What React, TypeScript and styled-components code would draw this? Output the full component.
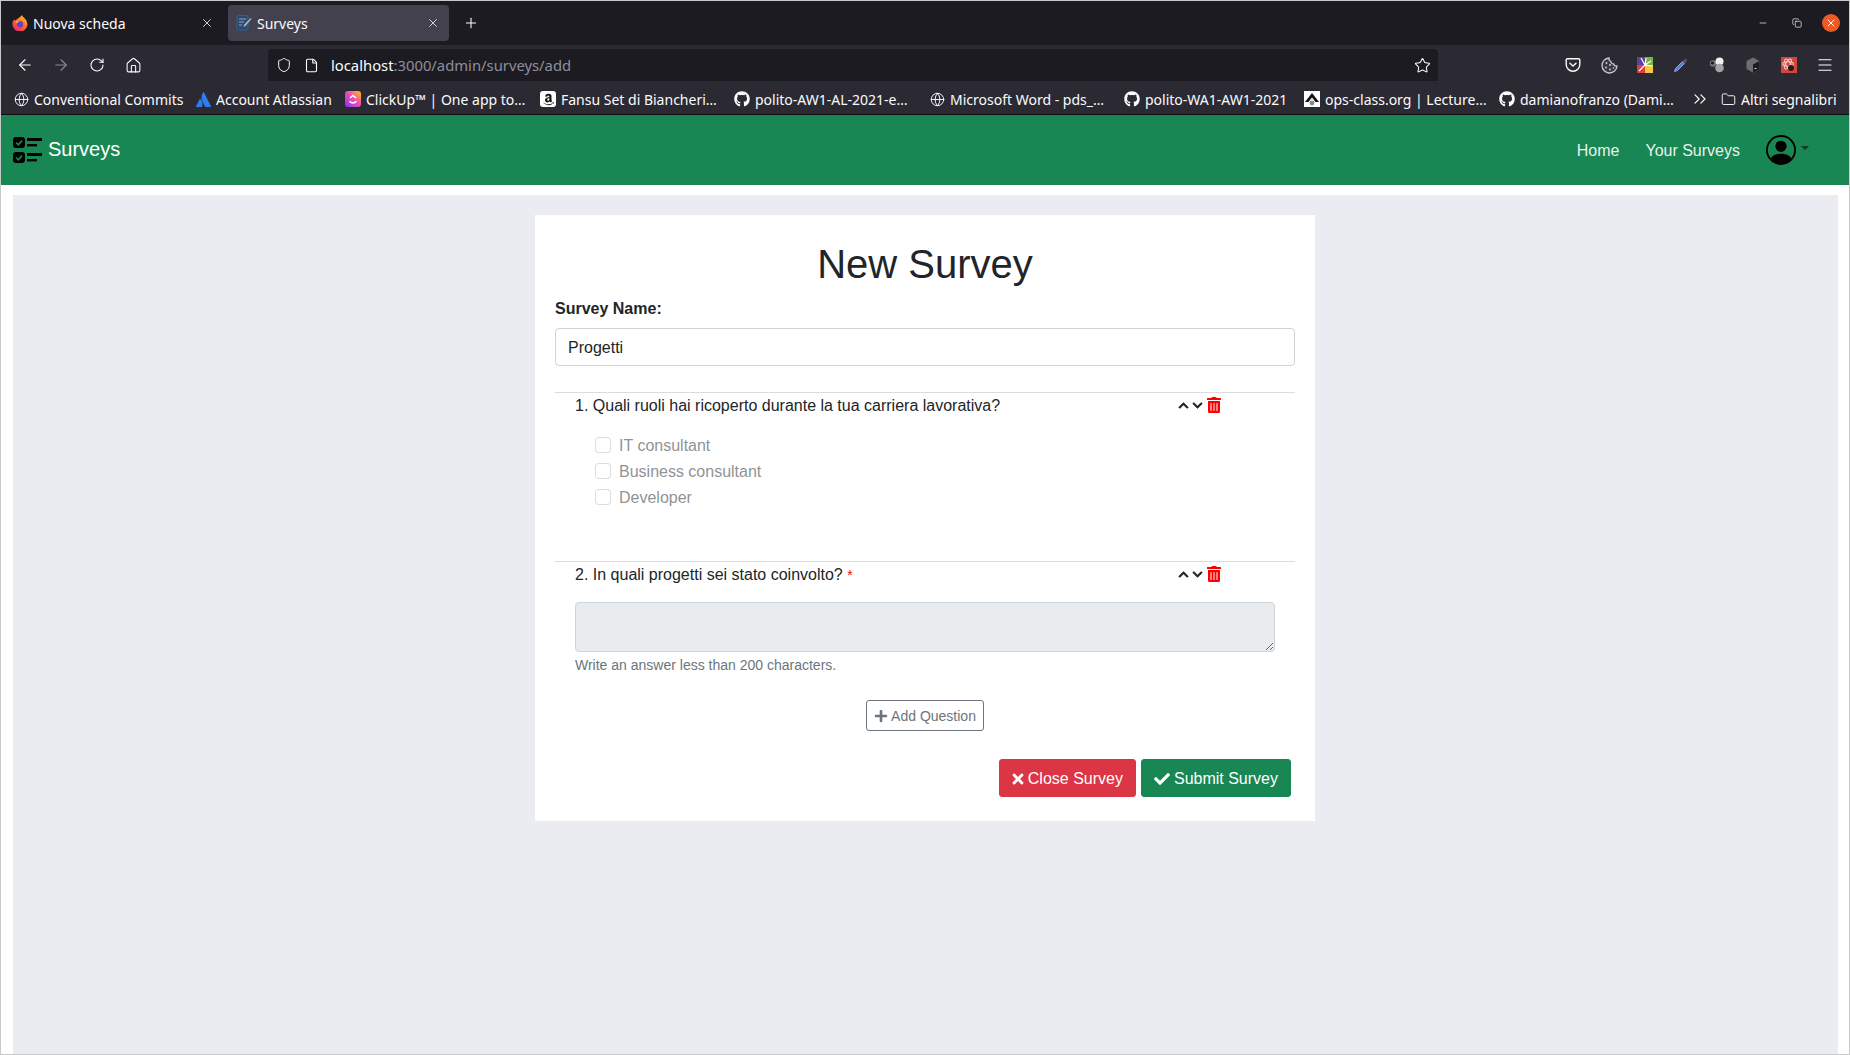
import React from 'react';
import styled, { createGlobalStyle } from 'styled-components';
import { ArrowLeft, ArrowRight, RotateCw, Home, Shield, File, Star, Globe, ChevronsRight, Folder, Menu, X, Plus, Minus, Copy } from 'lucide-react';
import { FaChevronUp, FaChevronDown, FaTrashAlt, FaTimes, FaCheck, FaPlus, FaGithub, FaAmazon } from 'react-icons/fa';
import { BsPersonCircle } from 'react-icons/bs';
import { SiAtlassian } from 'react-icons/si';

const GlobalStyle = createGlobalStyle`
  html, body { margin: 0; padding: 0; height: 100%; }
  body { background: #fff; font-family: "Liberation Sans", Arial, sans-serif; font-size: 16px; color: #212529; }
  * { box-sizing: border-box; }
`;

const FirefoxIcon = () => (
  <svg width="16" height="16" viewBox="0 0 16 16">
    <defs>
      <linearGradient id="ff" x1="0.8" y1="0" x2="0.2" y2="1">
        <stop offset="0" stopColor="#ffc42e" />
        <stop offset="0.5" stopColor="#ff6a2a" />
        <stop offset="1" stopColor="#e3236a" />
      </linearGradient>
    </defs>
    <path d="M10 0c.3 1.800 2 2.400 3.300 3.900A7.500 7.500 0 1 1 2.300 4.200C2.600 5 3 5.400 3.600 5.600 4.600 3.700 8 3 10 0z" fill="url(#ff)" />
    <circle cx="8" cy="9.300" r="3.200" fill="#6b3fc4" />
    <path d="M3.500 6.500c1.500-.8 3-.8 4.500 0-1.500 0-2.700.8-3 2.300z" fill="#ffb02e" />
  </svg>
);

const SurveyFavicon = () => (
  <svg width="16" height="16" viewBox="0 0 16 16">
    <rect x="1" y="0.5" width="11" height="14.5" rx="1.500" fill="#2c4a6e" stroke="#35608f" />
    <path d="M3 4h7M3 7h5M3 10h3" stroke="#8fa6bf" strokeWidth="1" />
    <path d="M14.500 3l1 1-6 7-2 1 .6-2.200z" fill="#aab4c0" />
  </svg>
);

const ClickUpIcon = () => (
  <svg width="16" height="16" viewBox="0 0 16 16">
    <defs>
      <linearGradient id="cu" x1="0" y1="1" x2="1" y2="0">
        <stop offset="0" stopColor="#8930fd" />
        <stop offset="0.55" stopColor="#f04fb0" />
        <stop offset="1" stopColor="#ffc800" />
      </linearGradient>
    </defs>
    <rect width="16" height="16" rx="3" fill="url(#cu)" />
    <path d="M5 7l3-2.500L11 7" fill="none" stroke="#fff" strokeWidth="1.600" />
    <path d="M4.500 10.200C6.500 12.400 9.500 12.400 11.500 10.200" fill="none" stroke="#fff" strokeWidth="1.600" />
  </svg>
);

const OpsIcon = () => (
  <svg width="16" height="16" viewBox="0 0 16 16">
    <rect width="16" height="16" fill="#fff" />
    <path d="M8 2L15 11h-3.400L8 6.500 4.400 11H1z" fill="#111" />
    <circle cx="8" cy="12" r="2.400" fill="#888" />
  </svg>
);

const PocketIcon = () => (
  <svg width="16" height="16" viewBox="0 0 16 16" fill="none" stroke="#fbfbfe" strokeWidth="1.400">
    <path d="M2.500 1.700h11a1.300 1.300 0 0 1 1.300 1.300v4.500a6.800 6.800 0 0 1-13.600 0V3a1.300 1.300 0 0 1 1.300-1.300z" />
    <path d="M5 6.300l3 2.800 3-2.800" strokeLinecap="round" />
  </svg>
);

const CookieIcon = () => (
  <svg width="17" height="17" viewBox="0 0 17 17">
    <path d="M8 1a7.500 7.500 0 1 0 8 8c-1.600 .3-3-.5-3.300-2-1.500 .2-3-1-2.800-2.700C8.500 4 7.700 2.500 8 1z" fill="#3a3942" stroke="#c9c9cf" strokeWidth="1.300" />
    <g fill="#c9c9cf">
      <circle cx="5.500" cy="6" r="1" />
      <circle cx="9" cy="8" r="1" />
      <circle cx="5" cy="10.500" r="1" />
      <circle cx="9" cy="12.500" r="1" />
      <circle cx="12.500" cy="11" r=".8" />
    </g>
  </svg>
);

const MosaicIcon = () => (
  <svg width="16" height="16" viewBox="0 0 16 16">
    <rect width="8" height="8" fill="#5f3e9e" />
    <rect x="8" width="8" height="8" fill="#71b83f" />
    <rect y="8" width="8" height="8" fill="#d9403a" />
    <rect x="8" y="8" width="8" height="8" fill="#f1c84e" />
    <path d="M8 8L4 1M8 8l1-7M8 8l6-4M8 8l7 1M8 8l-6 6" stroke="#fff" strokeWidth="1.200" />
  </svg>
);

const DropperIcon = () => (
  <svg width="16" height="16" viewBox="0 0 16 16">
    <path d="M1.500 14.500l1-3 7-7 2 2-7 7z" fill="#4f7fd8" stroke="#b9c8e6" strokeWidth=".7" />
    <path d="M9.500 4.500l3-3 2 2-3 3z" fill="#55545c" />
  </svg>
);

const SpheresIcon = () => (
  <svg width="16" height="16" viewBox="0 0 16 16">
    <circle cx="4" cy="6.500" r="3.200" fill="#77767d" />
    <circle cx="3.400" cy="6" r="1.600" fill="#1b1b1f" />
    <circle cx="10.500" cy="4.500" r="4" fill="#f1f1f1" />
    <circle cx="10.500" cy="11" r="4.300" fill="#a4a4a8" />
  </svg>
);

const CubeIcon = () => (
  <svg width="16" height="16" viewBox="0 0 16 16">
    <path d="M8 0.500l6.500 3.500v8L8 15.500 1.500 12V4z" fill="#6e6e72" />
    <path d="M8 7.500l6.500-3.500v8L8 15.500z" fill="#1c1c20" />
    <path d="M9.500 11.500h2" stroke="#ddd" strokeWidth="1" />
  </svg>
);

const BugIcon = () => (
  <svg width="16" height="16" viewBox="0 0 16 16">
    <rect width="16" height="16" fill="#d4453c" />
    <g fill="none" stroke="#f3c5c0" strokeWidth="1.100">
      <ellipse cx="7" cy="7" rx="5.500" ry="2.300" />
      <ellipse cx="7" cy="7" rx="5.500" ry="2.300" transform="rotate(60 7 7)" />
      <ellipse cx="7" cy="7" rx="5.500" ry="2.300" transform="rotate(120 7 7)" />
    </g>
    <circle cx="10" cy="11" r="3" fill="#2a1a1a" />
  </svg>
);

const ChecklistLogo = () => (
  <svg width="29" height="26" viewBox="0 0 29 26">
    <rect x="0" y="0" width="12" height="11" rx="3" fill="#000" />
    <path d="M3 5.500l2.300 2.300L9 3.600" fill="none" stroke="#198754" strokeWidth="1.600" />
    <rect x="14" y="1" width="15" height="3" fill="#000" />
    <rect x="14" y="7" width="10" height="2.400" fill="#000" />
    <rect x="0" y="15" width="12" height="11" rx="3" fill="#000" />
    <path d="M3 20.500l2.300 2.300L9 18.600" fill="none" stroke="#198754" strokeWidth="1.600" />
    <rect x="14" y="16" width="15" height="3" fill="#000" />
    <rect x="14" y="22" width="10" height="2.400" fill="#000" />
  </svg>
);

const GithubMark = () => <FaGithub size={16} color="#fbfbfe" />;
const GlobeMark = () => <Globe size={15} color="#fbfbfe" strokeWidth={1.5} />;

function Amazon() {
  return (
    <AmazonBox>
      <FaAmazon size={13} color="#111" />
    </AmazonBox>
  );
}

const bookmarks = [
  { width: 182, icon: <GlobeMark />, label: 'Conventional Commits' },
  { width: 149, icon: <SiAtlassian size={15} color="#2f7bf0" />, label: 'Account Atlassian' },
  { width: 195, icon: <ClickUpIcon />, label: 'ClickUp™ | One app to…' },
  { width: 194, icon: <Amazon />, label: 'Fansu Set di Biancheri…' },
  { width: 196, icon: <GithubMark />, label: 'polito-AW1-AL-2021-e…' },
  { width: 194, icon: <GlobeMark />, label: 'Microsoft Word - pds_…' },
  { width: 180, icon: <GithubMark />, label: 'polito-WA1-AW1-2021' },
  { width: 195, icon: <OpsIcon />, label: 'ops-class.org | Lecture…' },
  { width: 193, icon: <GithubMark />, label: 'damianofranzo (Dami…' },
];

const questionOptions = ['IT consultant', 'Business consultant', 'Developer'];

const QuestionTools = () => (
  <Tools>
    <ToolIcon><FaChevronUp size={11} /></ToolIcon>
    <ToolIcon><FaChevronDown size={11} /></ToolIcon>
    <TrashIcon><FaTrashAlt size={16} /></TrashIcon>
  </Tools>
);

export default function App() {
  return (
    <Window>
      <GlobalStyle />
      <TabBar>
        <Tab $width={215} $pad={4}>
          <TabIcon><FirefoxIcon /></TabIcon>
          <TabTitle>Nuova scheda</TabTitle>
          <TabClose><X size={14} strokeWidth={1.5} /></TabClose>
        </Tab>
        <Tab $width={221} $pad={8} $active>
          <TabIcon><SurveyFavicon /></TabIcon>
          <TabTitle>Surveys</TabTitle>
          <TabClose><X size={14} strokeWidth={1.5} /></TabClose>
        </Tab>
        <NewTab><Plus size={16} strokeWidth={1.6} /></NewTab>
        <WindowControls>
          <WindowButton><Minus size={10} strokeWidth={1.6} /></WindowButton>
          <WindowButton><Copy size={10} strokeWidth={1.6} /></WindowButton>
          <CloseCircle><X size={12} strokeWidth={2} /></CloseCircle>
        </WindowControls>
      </TabBar>

      <Toolbar>
        <NavButton><ArrowLeft size={18} strokeWidth={1.5} /></NavButton>
        <NavButton $disabled><ArrowRight size={18} strokeWidth={1.5} /></NavButton>
        <NavButton><RotateCw size={16} strokeWidth={1.6} /></NavButton>
        <NavButton><Home size={17} strokeWidth={1.5} /></NavButton>
        <UrlBar>
          <UrlIcon><Shield size={16} strokeWidth={1.5} /></UrlIcon>
          <UrlIcon><File size={15} strokeWidth={1.8} /></UrlIcon>
          <UrlText>localhost<UrlDim>:3000/admin/surveys/add</UrlDim></UrlText>
          <Star size={17} strokeWidth={1.5} />
        </UrlBar>
        <ToolbarActions>
          <ActionSlot><PocketIcon /></ActionSlot>
          <ActionSlot><CookieIcon /></ActionSlot>
          <ActionSlot><MosaicIcon /></ActionSlot>
          <ActionSlot><DropperIcon /></ActionSlot>
          <ActionSlot><SpheresIcon /></ActionSlot>
          <ActionSlot><CubeIcon /></ActionSlot>
          <ActionSlot><BugIcon /></ActionSlot>
          <ActionSlot><Menu size={18} strokeWidth={1.6} /></ActionSlot>
        </ToolbarActions>
      </Toolbar>

      <BookmarkBar>
        {bookmarks.map(b => (
          <Bookmark key={b.label} $width={b.width}>
            {b.icon}
            <span>{b.label}</span>
          </Bookmark>
        ))}
        <MoreBookmarks><ChevronsRight size={20} strokeWidth={1.4} /></MoreBookmarks>
        <Bookmark $width={118}>
          <Folder size={15} strokeWidth={1.5} />
          <span>Altri segnalibri</span>
        </Bookmark>
      </BookmarkBar>

      <Navbar>
        <Brand>
          <ChecklistLogo />
          <BrandName>Surveys</BrandName>
        </Brand>
        <NavLinks>
          <NavLink>Home</NavLink>
          <NavLink>Your Surveys</NavLink>
          <Avatar>
            <BsPersonCircle size={30} color="#000" />
            <Caret />
          </Avatar>
        </NavLinks>
      </Navbar>

      <Main>
        <Card>
          <Title>New Survey</Title>
          <FieldLabel>Survey Name:</FieldLabel>
          <NameInput defaultValue="Progetti" />

          <Question $height={169}>
            <QuestionHead>
              <QuestionText>1. Quali ruoli hai ricoperto durante la tua carriera lavorativa?</QuestionText>
              <QuestionTools />
            </QuestionHead>
            <Options>
              {questionOptions.map(o => (
                <OptionRow key={o}>
                  <Checkbox />
                  <OptionLabel>{o}</OptionLabel>
                </OptionRow>
              ))}
            </Options>
          </Question>

          <Question>
            <QuestionHead>
              <QuestionText>2. In quali progetti sei stato coinvolto? <Required>*</Required></QuestionText>
              <QuestionTools />
            </QuestionHead>
            <AnswerBox disabled />
            <HelpText>Write an answer less than 200 characters.</HelpText>
          </Question>

          <AddRow>
            <AddButton><FaPlus size={14} /> Add Question</AddButton>
          </AddRow>

          <Actions>
            <ActionButton $color="#dc3545"><CloseMark size={16} /> Close Survey</ActionButton>
            <ActionButton $color="#198754"><FaCheck size={16} /> Submit Survey</ActionButton>
          </Actions>
        </Card>
      </Main>
    </Window>
  );
}

const Window = styled.div`
  min-height: 100vh;
  display: flex;
  flex-direction: column;
  border: 1px solid #c9c9c9;
`;

const TabBar = styled.div`
  height: 44px;
  flex: none;
  display: flex;
  align-items: flex-start;
  padding: 4px 0 0 7px;
  gap: 5px;
  background: #1c1b22;
  color: #fbfbfe;
  font-family: "Noto Sans", sans-serif;
  font-size: 14px;
`;

const Tab = styled.div<{ $active?: boolean; $width: number; $pad: number }>`
  width: ${p => p.$width}px;
  height: 36px;
  display: flex;
  align-items: center;
  padding: 0 9px 0 ${p => p.$pad}px;
  border-radius: 4px;
  background: ${p => (p.$active ? '#42414d' : 'transparent')};
`;

const TabIcon = styled.span`
  display: flex;
  margin-right: 5px;
`;

const TabTitle = styled.span`
  flex: 1;
`;

const TabClose = styled.span`
  display: flex;
  color: #e8e8ea;
`;

const NewTab = styled.span`
  display: flex;
  align-items: center;
  height: 36px;
  margin-left: 9px;
`;

const WindowControls = styled.div`
  margin-left: auto;
  height: 36px;
  display: flex;
  align-items: center;
  gap: 24px;
  padding-right: 9px;
`;

const WindowButton = styled.span`
  display: flex;
  width: 10px;
`;

const CloseCircle = styled.span`
  width: 18px;
  height: 18px;
  margin-left: -4px;
  border-radius: 50%;
  background: #ef5a24;
  display: flex;
  align-items: center;
  justify-content: center;
`;

const Toolbar = styled.div`
  height: 36px;
  flex: none;
  display: flex;
  padding: 4px 6px 0 6px;
  background: #2b2a33;
  color: #fbfbfe;
`;

const NavButton = styled.span<{ $disabled?: boolean }>`
  width: 36px;
  height: 32px;
  display: flex;
  align-items: center;
  justify-content: center;
  opacity: ${p => (p.$disabled ? 0.45 : 1)};
`;

const UrlBar = styled.div`
  width: 1170px;
  height: 32px;
  margin-left: 117px;
  display: flex;
  align-items: center;
  padding: 0 7px 0 8px;
  border-radius: 4px 4px 0 0;
  background: #1c1b22;
`;

const UrlIcon = styled.span`
  display: flex;
  width: 28px;
  align-items: center;
`;

const UrlText = styled.span`
  flex: 1;
  margin-left: -1px;
  font-family: "Noto Sans", sans-serif;
  font-size: 14.8px;
`;

const UrlDim = styled.span`
  color: #8f8f9d;
`;

const ToolbarActions = styled.div`
  display: flex;
  margin-left: auto;
`;

const ActionSlot = styled.span`
  width: 36px;
  height: 32px;
  display: flex;
  align-items: center;
  justify-content: center;
`;

const BookmarkBar = styled.div`
  height: 34px;
  flex: none;
  display: flex;
  align-items: center;
  padding: 3px 0 0 13px;
  background: #2b2a33;
  color: #fbfbfe;
  font-family: "Noto Sans", sans-serif;
  font-size: 14px;
  border-bottom: 1px solid #0c0c0d;
  white-space: nowrap;
`;

const Bookmark = styled.div<{ $width: number }>`
  width: ${p => p.$width}px;
  flex: none;
  display: flex;
  align-items: center;
  gap: 5px;
  overflow: hidden;
`;

const AmazonBox = styled.span`
  width: 16px;
  height: 16px;
  border-radius: 3px;
  background: #fff;
  display: flex;
  align-items: center;
  justify-content: center;
`;

const MoreBookmarks = styled.span`
  width: 29px;
  flex: none;
  display: flex;
  margin-left: -2px;
  margin-right: 2px;
`;

const Navbar = styled.nav`
  height: 70px;
  flex: none;
  display: flex;
  align-items: center;
  justify-content: space-between;
  padding: 0 40px 0 12px;
  background: #198754;
`;

const Brand = styled.div`
  display: flex;
  align-items: center;
  gap: 6px;
`;

const BrandName = styled.span`
  font-size: 20px;
  color: #fff;
  margin-top: -2px;
`;

const NavLinks = styled.div`
  display: flex;
  align-items: center;
  gap: 26px;
`;

const NavLink = styled.a`
  color: rgba(255, 255, 255, 0.92);
  font-size: 16px;
  margin-top: 2px;
`;

const Avatar = styled.div`
  display: flex;
  align-items: flex-start;
  gap: 5px;
  margin-top: -1px;
`;

const Caret = styled.span`
  width: 0;
  height: 0;
  margin-top: 11px;
  border-left: 4px solid transparent;
  border-right: 4px solid transparent;
  border-top: 4px solid rgba(0, 0, 0, 0.55);
`;

const Main = styled.main`
  flex: 1;
  margin: 10px 11px 0 12px;
  padding: 20px 1px 0 0;
  background: #ebecf1;
`;

const Card = styled.section`
  width: 780px;
  margin: 0 auto;
  padding: 25px 20px 24px;
  background: #fff;
`;

const Title = styled.h1`
  margin: 0 0 8px;
  font-size: 40px;
  line-height: 48px;
  font-weight: 400;
  text-align: center;
`;

const FieldLabel = styled.label`
  display: block;
  font-weight: 700;
  line-height: 24px;
  padding-top: 1px;
  margin-bottom: 7px;
`;

const NameInput = styled.input`
  display: block;
  width: 100%;
  height: 38px;
  padding: 8px 12px 6px;
  border: 1px solid #ced4da;
  border-radius: 4px;
  font: inherit;
  color: #212529;
  margin-bottom: 26px;
`;

const Question = styled.div<{ $height?: number }>`
  border-top: 1px solid #dcdcdc;
  padding: 0 20px;
  height: ${p => (p.$height ? `${p.$height}px` : 'auto')};
`;

const QuestionHead = styled.div`
  display: grid;
  grid-template-columns: 603px auto;
  align-items: center;
  line-height: 24px;
`;

const QuestionText = styled.span`
  display: block;
  height: 24px;
  padding-top: 1px;
`;

const Tools = styled.div`
  display: flex;
  align-items: center;
  gap: 3px;
`;

const ToolIcon = styled.span`
  display: flex;
  width: 11px;
  color: #212529;

  svg {
    stroke: currentColor;
    stroke-width: 24px;
  }
`;

const TrashIcon = styled.span`
  display: flex;
  color: #ff0000;
`;

const Options = styled.div`
  margin: 15px 0 0 20px;
`;

const OptionRow = styled.div`
  height: 26px;
  display: flex;
  align-items: center;
  gap: 8px;
  opacity: 0.5;
`;

const OptionLabel = styled.span`
  padding-top: 2px;
`;

const Checkbox = styled.span`
  width: 16px;
  height: 16px;
  border: 1px solid rgba(0, 0, 0, 0.25);
  border-radius: 4px;
  background: #fff;
`;

const Required = styled.span`
  color: #ff0000;
  font-size: 14px;
`;

const AnswerBox = styled.textarea`
  display: block;
  width: 100%;
  height: 50px;
  margin-top: 16px;
  border: 1px solid #ced4da;
  border-radius: 4px;
  background: #e9ecef;
  resize: vertical;
`;

const HelpText = styled.div`
  margin-top: 3px;
  font-size: 14px;
  line-height: 21px;
  color: #6c757d;
`;

const AddRow = styled.div`
  display: flex;
  justify-content: center;
  margin-top: 24px;
`;

const AddButton = styled.button`
  display: flex;
  align-items: center;
  gap: 3px;
  height: 31px;
  padding: 0 7px;
  border: 1px solid #6c757d;
  border-radius: 3px;
  background: #fff;
  color: #6c757d;
  font: inherit;
  font-size: 14px;

  svg {
    width: auto;
  }
`;

const Actions = styled.div`
  display: flex;
  justify-content: flex-end;
  gap: 5px;
  margin-top: 28px;
  padding-right: 4px;
`;

const ActionButton = styled.button<{ $color: string }>`
  display: flex;
  align-items: center;
  gap: 4px;
  height: 38px;
  padding: 1px 12px 0;
  border: 1px solid ${p => p.$color};
  border-radius: 3px;
  background: ${p => p.$color};
  color: #fff;
  font: inherit;

  svg {
    width: auto;
  }
`;

const CloseMark = styled(FaTimes)`
  margin: 0 -2px;
`;
